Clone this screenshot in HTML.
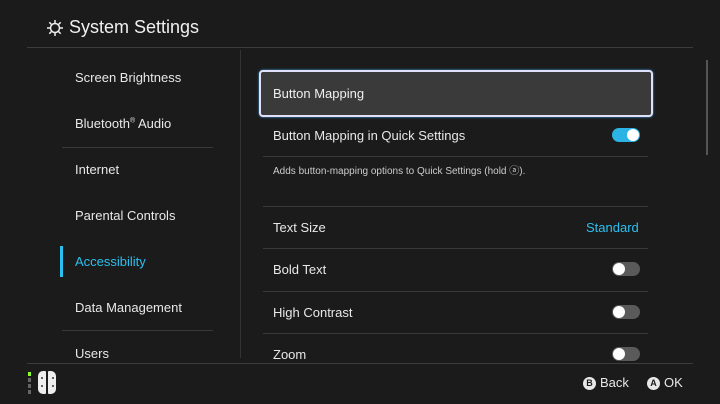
<!DOCTYPE html><html><head><style>
body{margin:0;width:720px;height:404px;background:#1b1b1b;font-family:"Liberation Sans",sans-serif;color:#e8e8e8;position:relative;overflow:hidden}
.a{position:absolute;white-space:nowrap}
.t{font-size:13px}
.hl{position:absolute;height:1px;background:#3a3a3a}
.tog{position:absolute;width:28px;height:14px;border-radius:7px;background:#5a5a5a}
.tog i{position:absolute;top:1px;left:1px;width:12px;height:12px;border-radius:6px;background:#fff}
.tog.on{background:#2bb3e6}.tog.on i{left:15px}
.c{display:inline-block;width:13px;height:13px;border-radius:7px;background:#e8e8e8;color:#1b1b1b;font-size:9px;font-weight:bold;text-align:center;line-height:13px;vertical-align:1px;margin-right:4px}
.d{position:absolute;width:2px;height:2px;border-radius:1px;background:#333}
</style></head><body>
<svg class="a" style="left:46px;top:19px" width="18" height="18" viewBox="0 0 18 18" fill="none" stroke="#eee" stroke-width="1.5"><circle cx="9" cy="9" r="4.5"/><path d="M9 1v3M9 14v3M1 9h3M14 9h3M3.3 3.3l2.1 2.1M12.6 12.6l2.1 2.1M3.3 14.7l2.1-2.1M12.6 5.4l2.1-2.1"/></svg>
<div class="a" style="left:69px;top:17px;font-size:18px;color:#f0f0f0">System Settings</div>
<div class="hl" style="left:27px;top:47px;width:666px;background:#3c3c3c"></div>
<div class="a" style="left:240px;top:50px;width:1px;height:308px;background:#333"></div>
<div class="a t" style="left:75px;top:70px">Screen Brightness</div>
<div class="a t" style="left:75px;top:116px">Bluetooth<sup style="font-size:7px">®</sup> Audio</div>
<div class="hl" style="left:62px;top:147px;width:151px"></div>
<div class="a t" style="left:75px;top:162px">Internet</div>
<div class="a t" style="left:75px;top:208px">Parental Controls</div>
<div class="a" style="left:60px;top:246px;width:3px;height:31px;background:#2bc0f0"></div>
<div class="a t" style="left:75px;top:254px;color:#2bc0f0">Accessibility</div>
<div class="a t" style="left:75px;top:300px">Data Management</div>
<div class="hl" style="left:62px;top:330px;width:151px"></div>
<div class="a t" style="left:75px;top:346px">Users</div>
<div class="a" style="left:259px;top:70px;width:390px;height:43px;border-radius:4px;border:2px solid #e0e0f8;background:#3a3a3a;box-shadow:0 0 2px #4af"></div>
<div class="a t" style="left:273px;top:86px;color:#f0f0f0">Button Mapping</div>
<div class="a t" style="left:273px;top:128px">Button Mapping in Quick Settings</div>
<div class="tog on" style="left:612px;top:128px"><i></i></div>
<div class="hl" style="left:263px;top:156px;width:385px"></div>
<div class="a" style="left:273px;top:162px;font-size:10px;color:#ccc">Adds button-mapping options to Quick Settings (hold ⓐ).</div>
<div class="hl" style="left:263px;top:206px;width:385px"></div>
<div class="a t" style="left:273px;top:220px">Text Size</div>
<div class="a t" style="left:586px;top:220px;color:#2bc0f0">Standard</div>
<div class="hl" style="left:263px;top:248px;width:385px"></div>
<div class="a t" style="left:273px;top:262px">Bold Text</div>
<div class="tog" style="left:612px;top:262px"><i></i></div>
<div class="hl" style="left:263px;top:291px;width:385px"></div>
<div class="a t" style="left:273px;top:305px">High Contrast</div>
<div class="tog" style="left:612px;top:305px"><i></i></div>
<div class="hl" style="left:263px;top:333px;width:385px"></div>
<div class="a t" style="left:273px;top:347px">Zoom</div>
<div class="tog" style="left:612px;top:347px"><i></i></div>
<div class="a" style="left:706px;top:60px;width:2px;height:95px;background:#555"></div>
<div class="hl" style="left:27px;top:363px;width:666px;background:#3c3c3c"></div>
<div class="a" style="left:28px;top:372px;width:3px;height:4px;background:#8f3"></div>
<div class="a" style="left:28px;top:378px;width:3px;height:4px;background:#666"></div>
<div class="a" style="left:28px;top:384px;width:3px;height:4px;background:#666"></div>
<div class="a" style="left:28px;top:390px;width:3px;height:4px;background:#666"></div>
<div class="a" style="left:38px;top:371px;width:8px;height:23px;border-radius:5px 1px 1px 5px;background:#eee"></div>
<div class="a" style="left:48px;top:371px;width:8px;height:23px;border-radius:1px 5px 5px 1px;background:#eee"></div>
<div class="d" style="left:41px;top:377px"></div><div class="d" style="left:41px;top:385px"></div>
<div class="d" style="left:52px;top:377px"></div><div class="d" style="left:52px;top:385px"></div>
<div class="a t" style="left:583px;top:375px"><span class="c">B</span>Back</div>
<div class="a t" style="left:647px;top:375px"><span class="c">A</span>OK</div>
</body></html>
